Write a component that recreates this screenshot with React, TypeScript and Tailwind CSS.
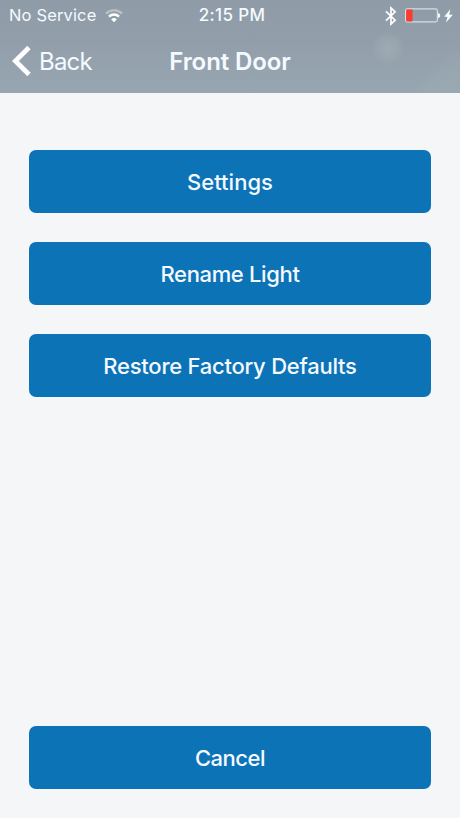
interface ActionButtonProps {
  label: string;
  className: string;
}

function ActionButton({ label, className }: ActionButtonProps) {
  return (
    <button
      className={`flex h-[63px] w-full shrink-0 items-center justify-center rounded-[7px] bg-[#0d73b7] text-[22px] leading-none font-[550] text-[#f4faff] ${className}`}
    >
      {label}
    </button>
  );
}

function WifiIcon() {
  return (
    <svg width="18" height="14" viewBox="0 0 18 14" fill="none">
      <path d="M1 4.6a11.4 11.4 0 0 1 16 0" stroke="#fff" strokeOpacity="0.35" strokeWidth="2.4" />
      <path d="M4 7.6a7.2 7.2 0 0 1 10 0" stroke="#fff" strokeWidth="2.5" />
      <path d="M9 13.2 6.2 10.4a4.1 4.1 0 0 1 5.6 0Z" fill="#fff" />
    </svg>
  );
}

function BluetoothIcon() {
  return (
    <svg width="12" height="20" viewBox="0 0 12 20" fill="none" stroke="#fff" strokeWidth="1.7">
      <path d="m1 5.4 9.1 8.8L6 18V2l4.1 3.8L1 14.6" />
    </svg>
  );
}

function BatteryIcon() {
  return (
    <svg width="36" height="15" viewBox="0 0 36 15" fill="none">
      <rect x="0.6" y="0.9" width="31.8" height="13" rx="1.8" stroke="#e5edf2" strokeOpacity="0.8" strokeWidth="1.2" />
      <rect x="1.2" y="1.4" width="6.4" height="12" rx="0.8" fill="#fb3b30" />
      <path d="M33 4.9c2.9.3 2.9 4.8 0 5.1Z" fill="#f4faff" />
    </svg>
  );
}

function StatusBar() {
  return (
    <div className="grid h-[30px] grid-cols-3 items-center pt-px pr-[7px] pl-[9px] text-[16.5px] leading-none text-[#f4faff]">
      <div className="flex items-center gap-[9px]">
        <span className="tracking-[0.15px] whitespace-nowrap">No Service</span>
        <WifiIcon />
      </div>
      <div className="pl-0.5 text-center text-[17px] font-medium tracking-[0.35px]">2:15 PM</div>
      <div className="flex items-center justify-end">
        <BluetoothIcon />
        <span className="ml-2 flex">
          <BatteryIcon />
        </span>
        <svg className="ml-[3px]" width="9" height="14" viewBox="0 0 9 14" fill="#fff">
          <path d="M6.3.2.2 7.8h3.3L2 13.6 8.9 5.7H5.2Z" />
        </svg>
      </div>
    </div>
  );
}

function NavBar() {
  return (
    <div className="grid h-[63px] grid-cols-[1fr_auto_1fr] items-center text-[24px] leading-none text-[#f4faff]">
      <button className="flex items-center pl-3">
        <svg width="19" height="31" viewBox="0 0 19 31" fill="none">
          <path d="M17 1.5 3.4 15 17 28.5" stroke="#fff" strokeWidth="4.8" />
        </svg>
        <span className="ml-2 tracking-[-0.8px]">Back</span>
      </button>
      <h1 className="font-semibold tracking-[-0.1px]">Front Door</h1>
    </div>
  );
}

export default function App() {
  return (
    <div className="flex h-screen w-full flex-col bg-[#f4f6f8] font-['Inter',sans-serif]">
      <header className="h-[93px] shrink-0 bg-[radial-gradient(circle_at_388px_48px,rgba(168,180,184,0.5)_0,rgba(168,180,184,0.35)_8px,transparent_17px),radial-gradient(circle_at_490px_125px,rgba(168,182,188,0.15)_70px,transparent_84px),linear-gradient(180deg,#8f9ba7_0%,#929faa_45%,#98a6b1_100%)]">
        <StatusBar />
        <NavBar />
      </header>
      <main className="flex flex-1 flex-col gap-[29px] px-[29px] pt-[57px] pb-[29px]">
        <ActionButton label="Settings" className="" />
        <ActionButton label="Rename Light" className="tracking-[-0.35px]" />
        <ActionButton label="Restore Factory Defaults" className="tracking-[-0.25px]" />
        <ActionButton label="Cancel" className="mt-auto tracking-[-0.5px]" />
      </main>
    </div>
  );
}
